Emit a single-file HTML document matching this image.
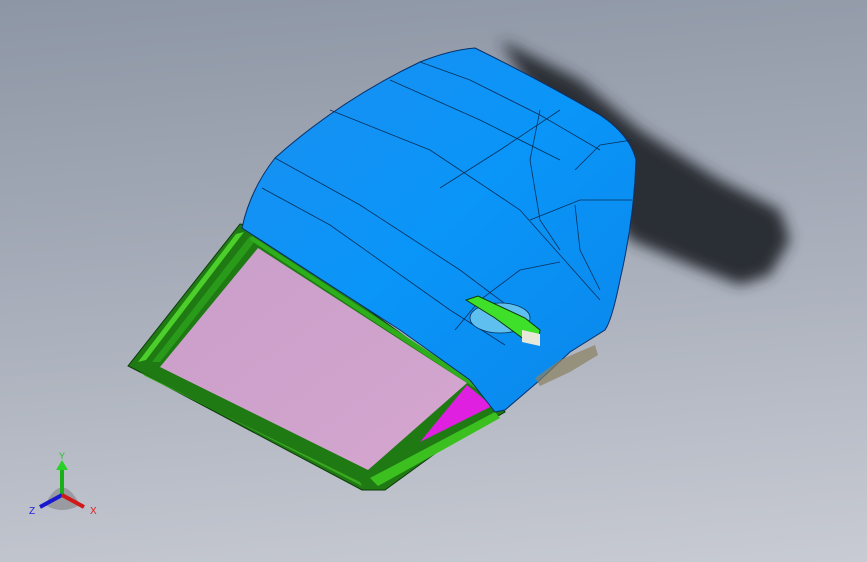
<!DOCTYPE html>
<html><head><style>
html,body{margin:0;padding:0;}
body{width:867px;height:562px;overflow:hidden;background:linear-gradient(175deg,#8d96a5 0%,#a9afbb 50%,#c8cbd3 100%);}
svg{position:absolute;left:0;top:0;}
</style></head><body>
<svg width="867" height="562" viewBox="0 0 867 562">
<defs>
<filter id="b" x="-20%" y="-20%" width="140%" height="140%"><feGaussianBlur stdDeviation="7"/></filter>
<linearGradient id="bl" x1="0" y1="0" x2="1" y2="1">
<stop offset="0" stop-color="#1a8ff0"/><stop offset="0.5" stop-color="#0a95f8"/><stop offset="1" stop-color="#0a86ea"/></linearGradient>
<linearGradient id="pk" x1="0" y1="0" x2="1" y2="1">
<stop offset="0" stop-color="#c99ec8"/><stop offset="1" stop-color="#d4a6d0"/></linearGradient>
</defs>
<path d="M500 40 L580 80 L640 130 L720 180 L780 210 L790 240 L770 275 L740 285 L690 265 L630 240 L600 200 Z" fill="#2b2e34" filter="url(#b)"/>
<!-- green frame -->
<path d="M240 224 L252 226 L500 405 L505 412 L440 450 L385 490 L362 490 L140 372 L128 366 Z" fill="#1f7a14" stroke="#0c3a08" stroke-width="1"/>
<path d="M236 234 L244 232 L146 360 L138 362 Z" fill="#4ccf2a"/>
<path d="M250 236 L256 240 L160 362 L152 362 Z" fill="#2a9a1a"/>
<path d="M145 376 L360 482 L362 486 L140 372 Z" fill="#3aa820"/>
<path d="M370 478 L495 412 L500 418 L378 486 Z" fill="#3cc020"/>
<path d="M252 236 L480 385 L478 390 L250 240 Z" fill="#2fae1c"/>
<!-- pink glass -->
<path d="M258 248 L467 383 L368 470 L160 367 Z" fill="url(#pk)"/>
<path d="M467 385 L492 406 L420 442 Z" fill="#e020e0"/>
<!-- blue panel -->
<path d="M242 228 Q250 190 275 158 Q340 100 420 62 Q450 50 475 48 Q540 80 600 115 Q630 135 636 160 Q634 220 620 280 Q612 320 605 330 L570 352 L540 380 L505 410 L495 412 L470 380 L400 330 L330 285 Z" fill="url(#bl)" stroke="#08306a" stroke-width="1"/>
<g fill="none" stroke="#08305a" stroke-width="0.8">
<path d="M262 188 L330 225 L450 310 L505 345"/>
<path d="M275 158 L360 205 L460 270 L540 330"/>
<path d="M420 62 L470 80 L540 115 L600 150"/>
<path d="M390 80 L480 120 L560 160"/>
<path d="M330 110 L430 150 L520 210 L560 255 L600 300"/>
<path d="M440 188 L500 150 L560 110"/>
<path d="M540 110 L530 160 L540 220 L560 250"/>
<path d="M575 170 L600 145 L632 140"/>
<path d="M530 220 L580 200 L632 200"/>
<path d="M575 205 L580 250 L600 290"/>
<path d="M455 330 L480 300 L520 270 L560 262"/>
</g>
<ellipse cx="500" cy="318" rx="30" ry="15" fill="#5fc0f0" stroke="#08305a" stroke-width="0.8"/>
<path d="M466 300 L478 296 L525 318 L540 330 L538 344 L525 340 L495 318 Z" fill="#3ee02a" stroke="#0c3a08" stroke-width="1"/>
<path d="M522 330 L540 334 L540 346 L522 342 Z" fill="#e8e8d8"/>
<path d="M535 378 L560 360 L595 345 L598 355 L570 372 L540 386 Z" fill="#8a8060" opacity="0.7"/>
</svg>
<svg width="867" height="562" viewBox="0 0 867 562">
<path d="M45 505 Q62 470 80 505 Q62 515 45 505 Z" fill="#8a8c90" opacity="0.7"/>
<line x1="62" y1="495" x2="62" y2="468" stroke="#18b018" stroke-width="4"/>
<path d="M56 470 L62 460 L68 470 Z" fill="#28d028"/>
<line x1="62" y1="495" x2="40" y2="507" stroke="#1818d0" stroke-width="4"/>
<line x1="62" y1="495" x2="84" y2="507" stroke="#d01818" stroke-width="4"/>
<text x="59" y="459" font-family="Liberation Sans,sans-serif" font-size="9" fill="#20c020">Y</text>
<text x="29" y="514" font-family="Liberation Sans,sans-serif" font-size="10" fill="#2020e0">Z</text>
<text x="90" y="514" font-family="Liberation Sans,sans-serif" font-size="10" fill="#e02020">X</text>
</svg>
</body></html>
